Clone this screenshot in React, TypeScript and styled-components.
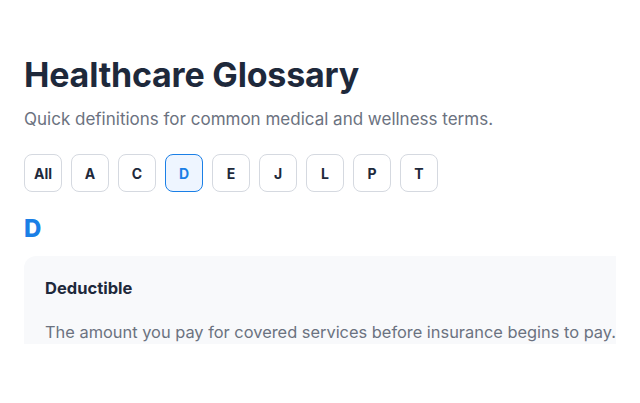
import React, { useState } from 'react';
import styled, { createGlobalStyle } from 'styled-components';

const GlobalStyle = createGlobalStyle`
    html, body {
        margin: 0;
        padding: 0;
        background: #ffffff;
    }
    body {
        font-family: Inter, "Noto Sans", "Liberation Sans", sans-serif;
        color: #1e293b;
    }
`;

const Viewport = styled.div`
    width: 616px;
    height: 344px;
    overflow: hidden;
`;

const Page = styled.main`
    padding: 55px 0 0 24px;
    width: 680px;
`;

const Title = styled.h1`
    margin: 0;
    font-size: 34px;
    line-height: 40px;
    font-weight: 700;
    color: #1e293b;
    letter-spacing: -0.2px;
`;

const Subtitle = styled.p`
    margin: 12px 0 0;
    font-size: 17px;
    line-height: 24px;
    color: #6b7280;
`;

const LetterBar = styled.div`
    display: flex;
    gap: 9px;
    margin-top: 23px;
`;

const LetterButton = styled.button<{ active: boolean }>`
    min-width: 38px;
    height: 38px;
    padding: 0 6px;
    border-radius: 8px;
    border: 1px solid ${({ active }) => (active ? '#1a7fe6' : '#d5d9e0')};
    background: ${({ active }) => (active ? '#eef5ff' : '#ffffff')};
    color: ${({ active }) => (active ? '#1a7fe6' : '#1e293b')};
    font-family: inherit;
    font-size: 14px;
    font-weight: 700;
    cursor: pointer;
`;

const SectionLetter = styled.h2`
    margin: 23px 0 0;
    font-size: 24px;
    line-height: 28px;
    font-weight: 800;
    color: #1a7fe6;
`;

const Card = styled.article`
    margin-top: 13px;
    background: #f8f9fb;
    border-radius: 12px;
    padding: 21px 21px 20px;
`;

const Term = styled.h3`
    margin: 0;
    font-size: 16.5px;
    line-height: 22px;
    font-weight: 700;
    color: #1e293b;
`;

const Definition = styled.p`
    margin: 21px 0 0;
    font-size: 16.4px;
    line-height: 24px;
    color: #6b7280;
`;

const LETTERS = ['All', 'A', 'C', 'D', 'E', 'J', 'L', 'P', 'T'];

export default function App() {
    const [selected, setSelected] = useState('D');

    return (
        <>
            <GlobalStyle />
            <Viewport>
                <Page>
                    <Title>Healthcare Glossary</Title>
                    <Subtitle>Quick definitions for common medical and wellness terms.</Subtitle>
                    <LetterBar>
                        {LETTERS.map((l) => (
                            <LetterButton key={l} active={l === selected} onClick={() => setSelected(l)}>
                                {l}
                            </LetterButton>
                        ))}
                    </LetterBar>
                    <SectionLetter>D</SectionLetter>
                    <Card>
                        <Term>Deductible</Term>
                        <Definition>The amount you pay for covered services before insurance begins to pay.</Definition>
                    </Card>
                </Page>
            </Viewport>
        </>
    );
}
